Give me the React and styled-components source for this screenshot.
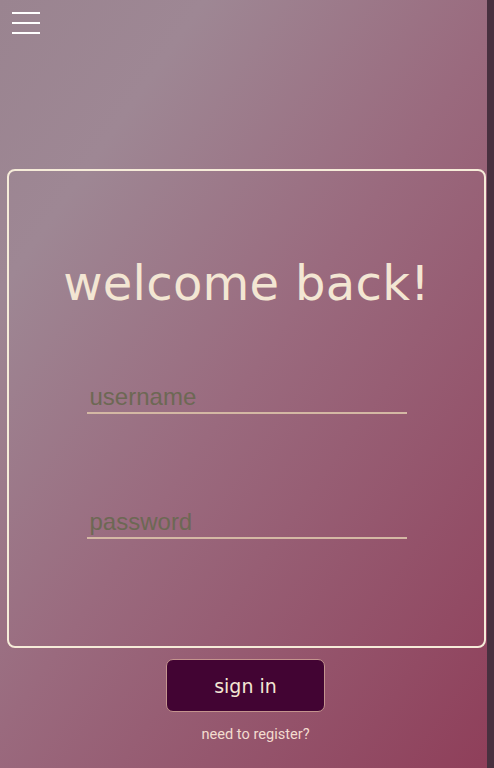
import styled, { createGlobalStyle } from "styled-components";

const Global = createGlobalStyle`
    html, body {
        margin: 0;
        padding: 0;
        height: 100%;
    }
    #root {
        height: 100%;
    }
`;

const Page = styled.div`
    width: 100%;
    height: 768px;
    display: flex;
`;

const Main = styled.div`
    flex: 1;
    background: linear-gradient(125deg, #9a8490 0%, #9e8794 20%, #9a6a7e 50%, #8f3f5a 100%);
    display: flex;
    flex-direction: column;
    align-items: center;
    padding: 12px 0 0 0;
    box-sizing: border-box;
`;

const Scrollbar = styled.div`
    width: 7px;
    background: #48303f;
`;

const TopBar = styled.div`
    width: 100%;
    height: 22px;
    padding-left: 12px;
    box-sizing: border-box;
`;

const Burger = styled.button`
    width: 28px;
    height: 22px;
    padding: 0;
    border: none;
    background: transparent;
    display: flex;
    flex-direction: column;
    justify-content: space-between;
    cursor: pointer;
    span{
        display: block;
        width: 28px;
        height: 2px;
        background: white;
    }
`;

const Card = styled.form`
    width: 479px;
    height: 479px;
    margin-top: 135px;
    box-sizing: border-box;
    border: 2px solid #f6ecd9;
    border-radius: 8px;
    display: flex;
    flex-direction: column;
    align-items: center;
    align-self: flex-start;
    margin-left: 7px;
`;

const Title = styled.h1`
    margin: 82px 0 0 0;
    font-family: "DejaVu Sans", sans-serif;
    font-weight: 400;
    font-size: 48px;
    line-height: 60px;
    color: #f3e6d3;
    letter-spacing: 0.3px;
`;

const Field = styled.input`
    width: 320px;
    height: 32px;
    margin-top: ${p => p.$top}px;
    padding: 0 0 0 3px;
    box-sizing: border-box;
    border: none;
    border-bottom: 2px solid #d4b8a4;
    background: transparent;
    outline: none;
    font-family: "Liberation Sans", Arial, sans-serif;
    font-size: 24px;
    color: #3e3a2e;
    &::placeholder{
        color: #6d6854;
        opacity: 1;
    }
`;

const Button = styled.button`
    width: 159px;
    height: 53px;
    margin: 11px 0 0 4px;
    background: #420433;
    border: 1.5px solid #c4948e;
    border-radius: 7px;
    color: #f3e6d3;
    font-family: "DejaVu Sans", sans-serif;
    font-size: 19px;
    cursor: pointer;
    padding: 0;
`;

const Register = styled.a`
    margin: 13px 0 0 24px;
    font-family: "Roboto", sans-serif;
    font-size: 14.6px;
    color: #f3dccf;
    text-decoration: none;
    cursor: pointer;
`;

const App = () => {
    return(
        <Page>
            <Global />
            <Main>
                <TopBar>
                    <Burger><span></span><span></span><span></span></Burger>
                </TopBar>
                <Card onSubmit={e => e.preventDefault()}>
                    <Title>welcome back!</Title>
                    <Field $top={69} placeholder="username" />
                    <Field $top={93} type="password" placeholder="password" />
                </Card>
                <Button>sign in</Button>
                <Register>need to register?</Register>
            </Main>
            <Scrollbar />
        </Page>
    )
}

export default App;
